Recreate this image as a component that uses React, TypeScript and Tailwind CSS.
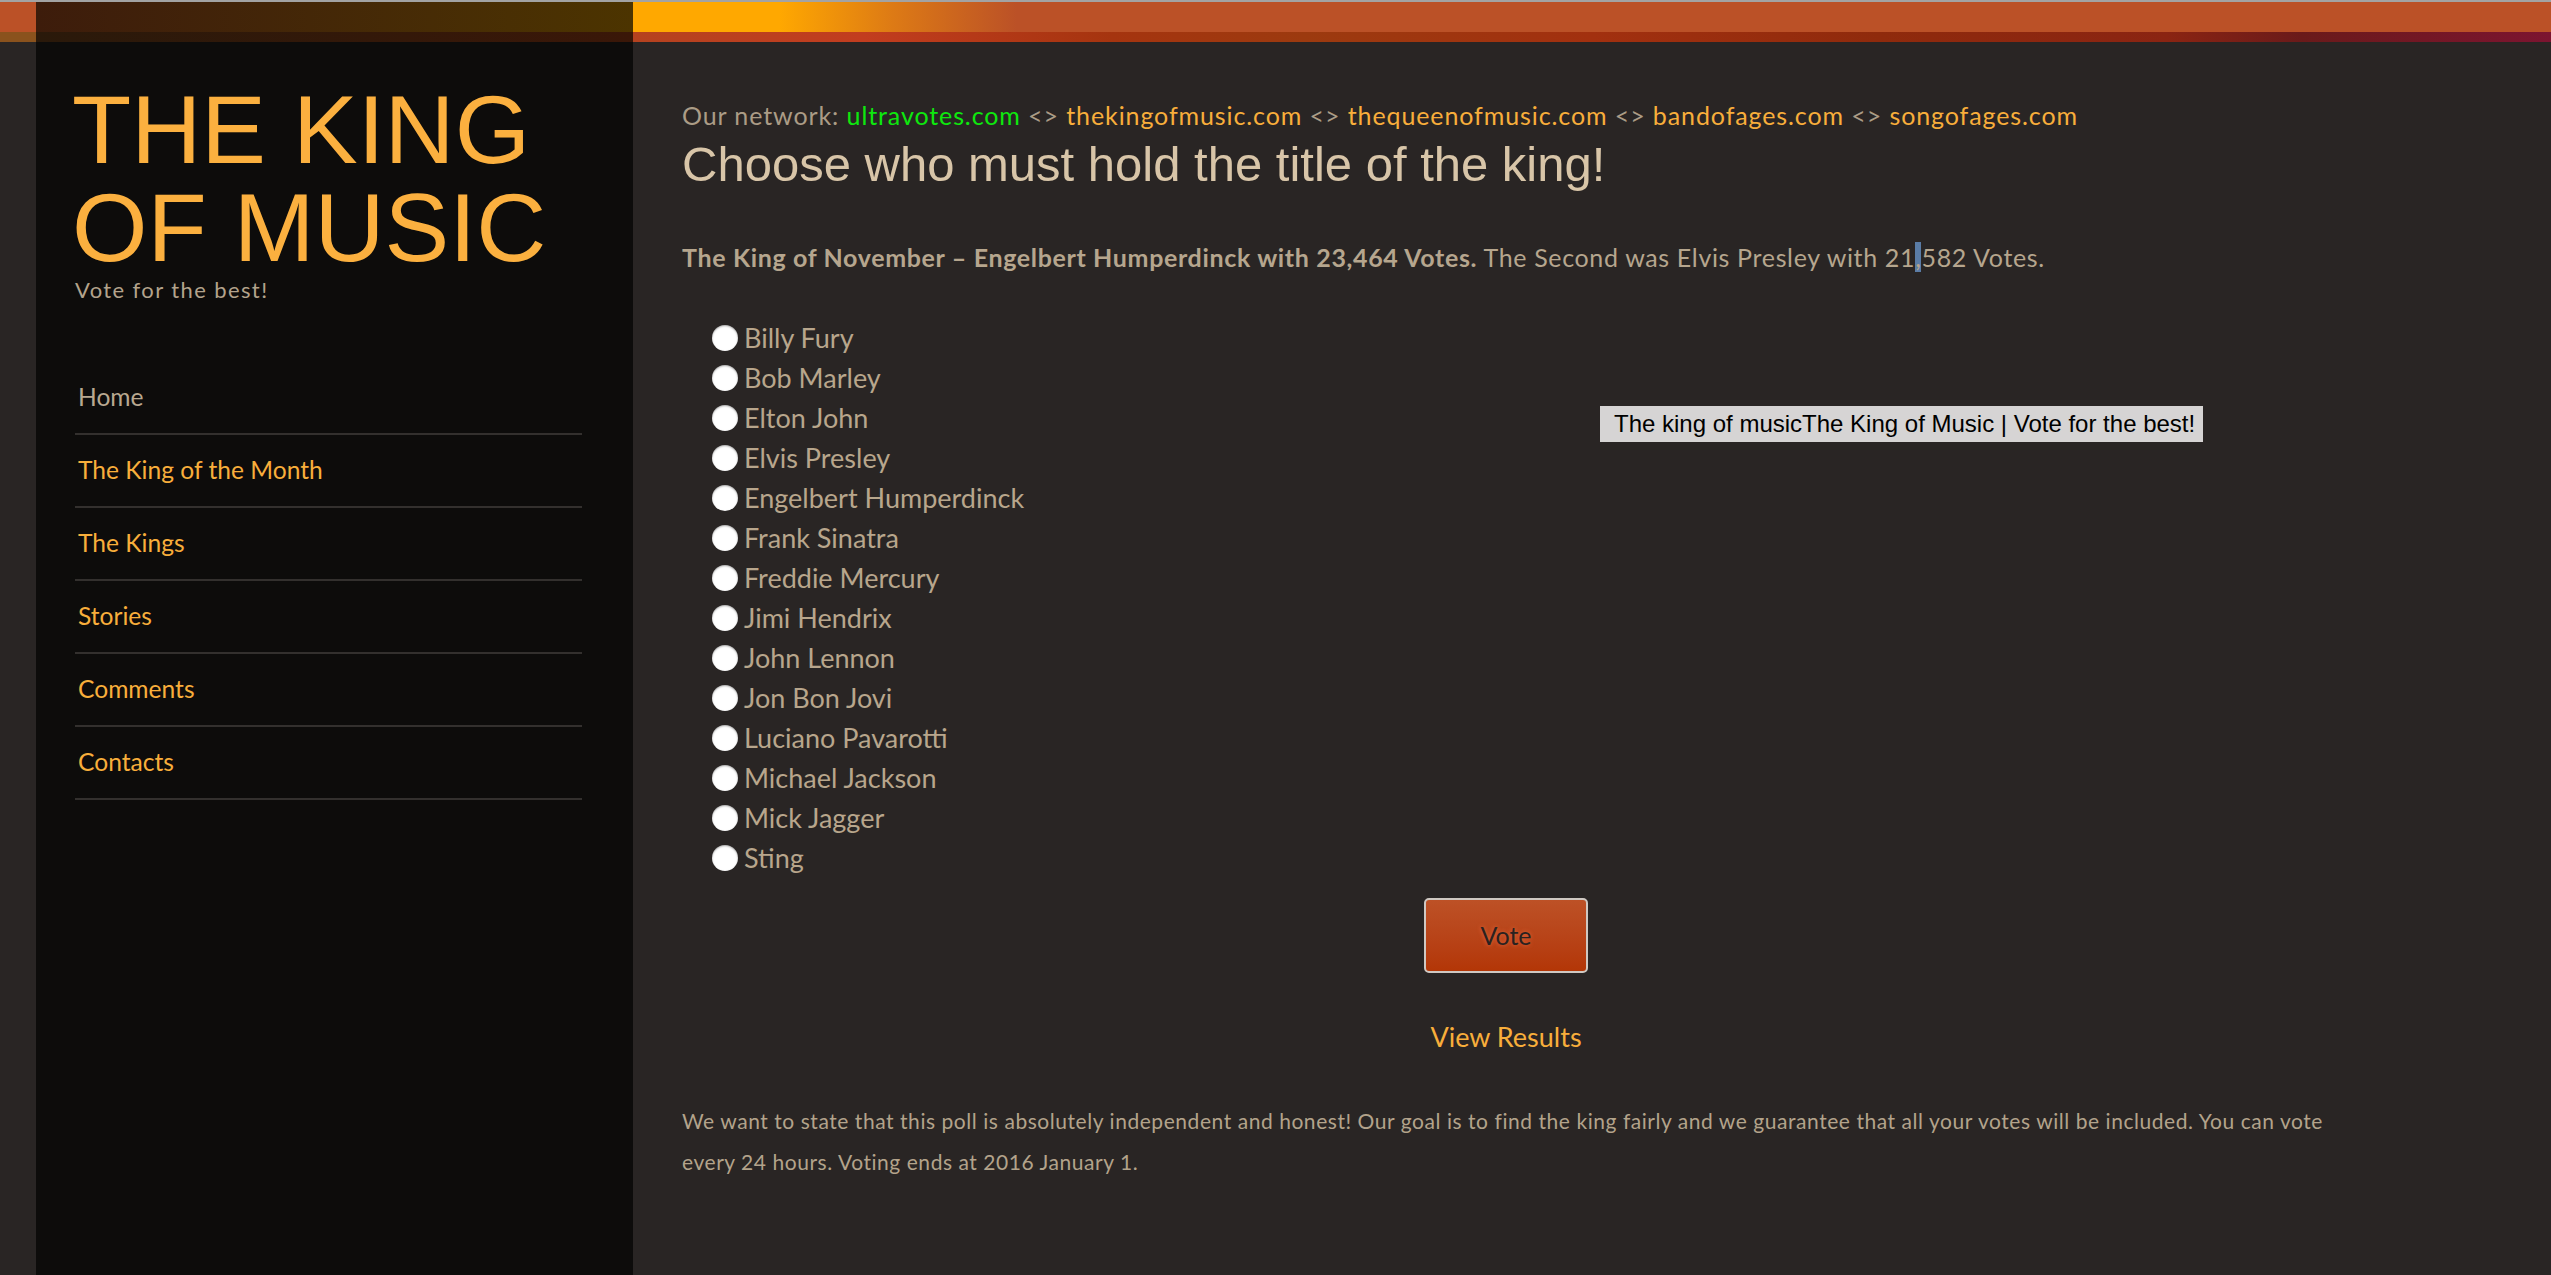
const nav = [
  { label: "Home", active: true },
  { label: "The King of the Month" },
  { label: "The Kings" },
  { label: "Stories" },
  { label: "Comments" },
  { label: "Contacts" },
];

const kings = [
  "Billy Fury",
  "Bob Marley",
  "Elton John",
  "Elvis Presley",
  "Engelbert Humperdinck",
  "Frank Sinatra",
  "Freddie Mercury",
  "Jimi Hendrix",
  "John Lennon",
  "Jon Bon Jovi",
  "Luciano Pavarotti",
  "Michael Jackson",
  "Mick Jagger",
  "Sting",
];

const network = ["thekingofmusic.com", "thequeenofmusic.com", "bandofages.com", "songofages.com"];

export default function App() {
  return (
    <div className="flex min-h-[1275px] bg-[#292524] font-['Lato',sans-serif]">
      {/* left gutter */}
      <div className="w-[36px] shrink-0">
        <div className="h-[2px] bg-[#a3a3a3]" />
        <div className="h-[30px] bg-[#bb5127]" />
        <div className="h-[10px] bg-[#8a521d]" />
      </div>

      {/* sidebar */}
      <aside className="w-[597px] shrink-0 bg-[#0d0c0b]">
        <div className="h-[2px] bg-[#a3a3a3]" />
        <div className="h-[30px] bg-gradient-to-r from-[#3d1c0b] to-[#4c3400]" />
        <div className="h-[10px] bg-gradient-to-r from-[#2a190a] to-[#3a1708]" />

        <div className="pl-[36px] pt-[39px]">
          <h1 className="font-['Liberation_Sans',Arial,sans-serif] text-[97px] leading-[98px] text-[#fbb03f]">
            THE KING
            <br />
            OF MUSIC
          </h1>
          <p className="mt-[1px] pl-[3px] text-[22px] leading-[24px] tracking-[1.4px] text-[#b3a38c]">
            Vote for the best!
          </p>
        </div>

        <nav className="mt-[60px] ml-[39px] w-[507px]">
          <ul>
            {nav.map((item) => (
              <li key={item.label} className="border-b-2 border-[#33302e]">
                <a
                  className={
                    "flex h-[71px] items-center pl-[3px] text-[24.6px] " +
                    (item.active ? "text-[#b8a890]" : "text-[#f8ae3b]")
                  }
                >
                  {item.label}
                </a>
              </li>
            ))}
          </ul>
        </nav>
      </aside>

      {/* main */}
      <main className="relative flex-1">
        <div className="h-[2px] bg-[#a3a3a3]" />
        <div className="h-[30px] bg-[linear-gradient(90deg,#ffa800_0px,#ffa800_146px,#dd7a15_260px,#bb5127_384px,#bb5127_100%)]" />
        <div className="h-[10px] bg-[linear-gradient(90deg,#b5421f_0%,#c23d1f_12%,#a5340f_25%,#9c3a0f_35%,#a2300f_50%,#8f2a0c_65%,#8a2412_80%,#6a1a1a_87%,#7c1430_100%)]" />

        <div className="pl-[49px] pr-[200px]">
          <p className="mt-[57px] text-[25px] leading-[32px] tracking-[0.9px] text-[#ab9c86]">
            Our network: <a className="text-[#0ee80e]">ultravotes.com</a>
            {network.map((site) => (
              <span key={site}>
                {" <> "}
                <a className="text-[#f8ae3b]">{site}</a>
              </span>
            ))}
          </p>

          <h2 className="mt-[7px] font-['Liberation_Sans',Arial,sans-serif] text-[49px] leading-[52px] text-[#d8c5a8]">
            Choose who must hold the title of the king!
          </h2>

          <p className="mt-[51px] text-[25px] leading-[32px] tracking-[0.65px] text-[#b6a68e]">
            <b className="font-bold">The King of November – Engelbert Humperdinck with 23,464 Votes.</b> The Second was
            Elvis Presley with 21<span className="bg-[#5a7ca6]">,</span>582 Votes.
          </p>

          <form className="mt-[45px]">
            <ul className="pl-[30px]">
              {kings.map((name) => (
                <li key={name} className="flex h-[40px] items-center gap-[6px]">
                  <input
                    type="radio"
                    name="king"
                    className="h-[26px] w-[26px] appearance-none rounded-full bg-white shadow-[inset_0_1px_2px_rgba(0,0,0,0.35)]"
                  />
                  <label className="text-[27px] text-[#b8a68c]">{name}</label>
                </li>
              ))}
            </ul>

            <div className="mr-[21px] mt-[20px] flex justify-center">
              <button
                type="button"
                className="h-[75px] w-[164px] rounded-[5px] border-2 border-[#cfc8c2] bg-gradient-to-b from-[#bd5126] to-[#b33606] text-[25px] text-[#2a2220] [text-shadow:0_0_4px_#e86a40]"
              >
                Vote
              </button>
            </div>
          </form>

          <p className="mr-[21px] mt-[48px] text-center text-[27px] leading-[32px] text-[#f8ae3b]">
            <a>View Results</a>
          </p>

          <p className="mt-[47px] text-[21px] leading-[41px] tracking-[0.55px] text-[#b3a38b]">
            We want to state that this poll is absolutely independent and honest! Our goal is to find the king fairly and we
            guarantee that all your votes will be included. You can vote
            <br />
            every 24 hours. Voting ends at 2016 January 1.
          </p>
        </div>

        {/* tooltip */}
        <div className="absolute left-[967px] top-[406px] flex h-[36px] w-[603px] items-center bg-[#d6d4d4] pl-[14px] font-['Liberation_Sans',Arial,sans-serif] text-[24px] text-black">
          The king of musicThe King of Music | Vote for the best!
        </div>
      </main>
    </div>
  );
}
